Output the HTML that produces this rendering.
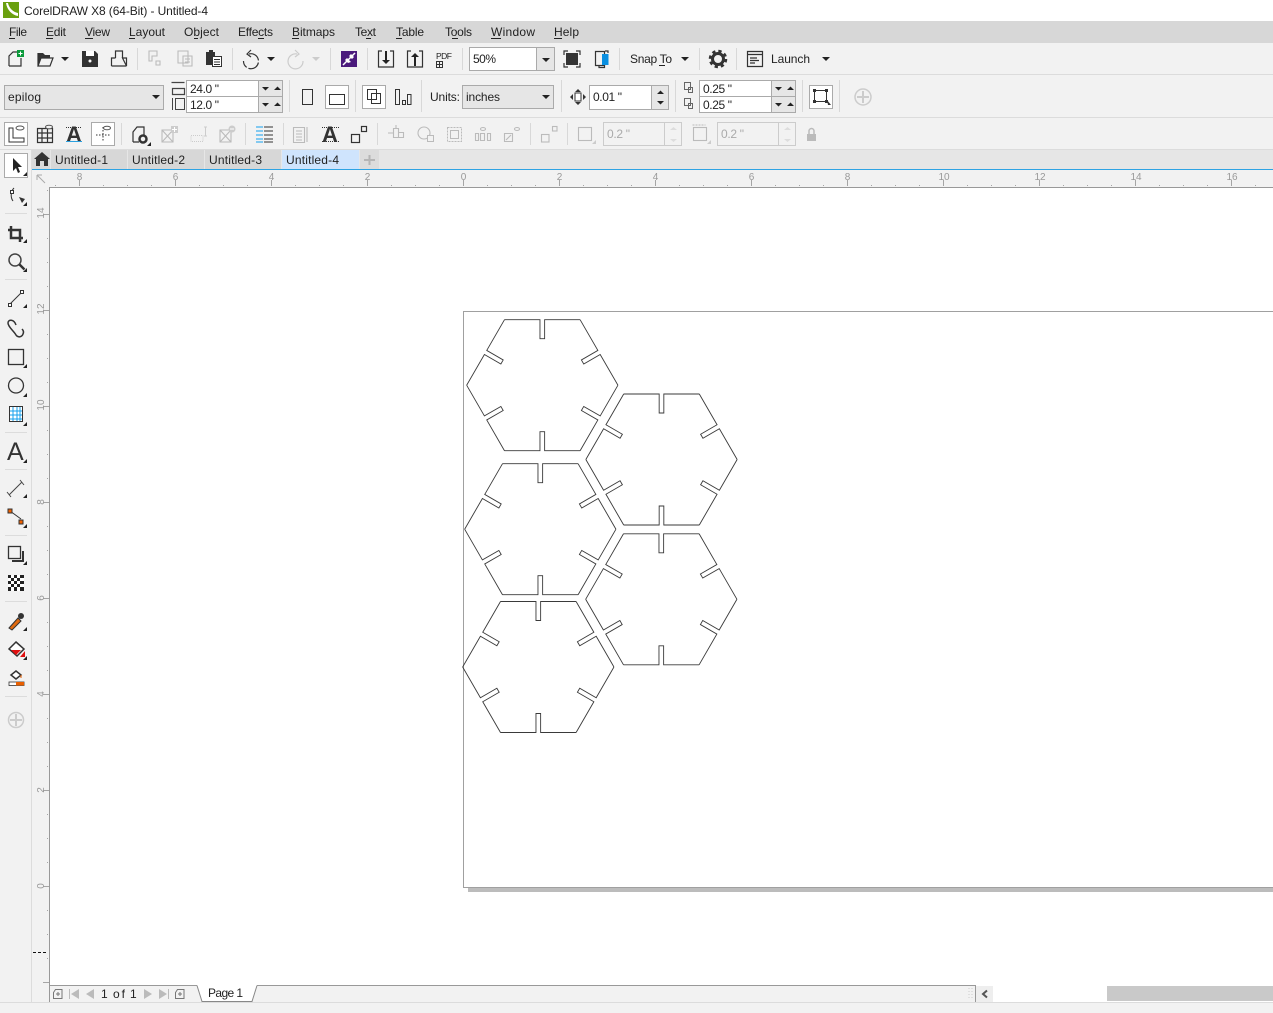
<!DOCTYPE html>
<html><head><meta charset="utf-8"><title>CorelDRAW X8</title>
<style>
html,body{margin:0;padding:0;background:#fff;overflow:hidden}
svg{display:block}
text{font-family:"Liberation Sans",sans-serif;font-size:12px;fill:#222}
.g{fill:#aaa}
.r{font-size:10px;fill:#999}
.s{fill:none;stroke:#333;stroke-width:1.2}
.d{fill:none;stroke:#bbb;stroke-width:1.1}
.k{fill:#333}
.dk{fill:#bbb}
.u{stroke:#222;stroke-width:1}
</style></head><body>
<svg xmlns="http://www.w3.org/2000/svg" width="1273" height="1013" viewBox="0 0 1273 1013">
<defs>
<path id="e" d="M-37.85-65.5H-2.33V-46.5H2.33V-65.5H37.85"/>
<g id="hex" fill="none" stroke="#3a3a3a" stroke-width=".9">
<use href="#e"/><use href="#e" transform="rotate(60)"/><use href="#e" transform="rotate(120)"/><use href="#e" transform="rotate(180)"/><use href="#e" transform="rotate(240)"/><use href="#e" transform="rotate(300)"/>
</g>
</defs>
<rect width="1273" height="1013" fill="#fff"/>
<!-- title -->
<rect x="3" y="2" width="16" height="16" fill="#6aa00f"/>
<path d="M6 3C7 10 12 15 18 16L18 13C13 12 9 8 8 3Z" fill="#fff"/>
<text x="24" y="15" textLength="184">CorelDRAW X8 (64-Bit) - Untitled-4</text>
<!-- menu -->
<rect y="21" width="1273" height="22" fill="#d7d7d7"/>
<text x="9" y="36" textLength="18">File</text><path class="u" d="M9 38.5h6"/>
<text x="46" y="36" textLength="20">Edit</text><path class="u" d="M46 38.5h7"/>
<text x="85" y="36" textLength="25">View</text><path class="u" d="M85 38.5h8"/>
<text x="129" y="36" textLength="36">Layout</text><path class="u" d="M129 38.5h6"/>
<text x="184" y="36" textLength="35">Object</text><path class="u" d="M194 38.5h4"/>
<text x="238" y="36" textLength="35">Effects</text><path class="u" d="M258 38.5h6"/>
<text x="292" y="36" textLength="43">Bitmaps</text><path class="u" d="M292 38.5h7"/>
<text x="355" y="36" textLength="21">Text</text><path class="u" d="M366 38.5h5"/>
<text x="396" y="36" textLength="28">Table</text><path class="u" d="M396 38.5h6"/>
<text x="445" y="36" textLength="27">Tools</text><path class="u" d="M452 38.5h6"/>
<text x="491" y="36" textLength="44">Window</text><path class="u" d="M491 38.5h10"/>
<text x="554" y="36" textLength="25">Help</text><path class="u" d="M554 38.5h8"/>
<!-- bars bg -->
<rect y="43" width="1273" height="107" fill="#f2f2f2"/>
<path d="M0 74.5H1273M0 117.5H1273M0 149.5H1273" stroke="#dcdcdc"/>
<rect x="0" y="150" width="32" height="863" fill="#f2f2f2"/>
<!-- row separators -->
<path d="M137.5 48v22M232.5 48v22M330.5 48v22M367.5 48v22M462.5 48v22M619.5 48v22M699.5 48v22M736.5 48v22M289.5 80v32M355.5 80v32M421.5 80v32M561.5 80v32M675.5 80v32M802.5 80v32M839.5 80v32M121.5 123v22M245.5 123v22M283.5 123v22M377.5 123v22M530.5 123v22M567.5 123v22" stroke="#d8d8d8"/>
<!-- row1 icons -->
<path class="s" d="M9 66V56L13 52H17M9 66H21V58"/>
<rect x="17" y="50" width="7" height="7" fill="#0a9a3a"/><path d="M20.500 51.500v4M18.500 53.500h4" stroke="#fff"/>
<path d="M38 53H43L45 55H50V58H41L38 66Z" fill="#333"/><path class="s" d="M38 66V53M38 66H50L53 58H41L38 66Z"/><path d="M61 57h8l-4 4z" fill="#222"/>
<path class="k" d="M82 51H95L98 54V67H82Z"/><rect x="86" y="51" width="8" height="5" fill="#fff"/><circle cx="90" cy="61" r="1.500" fill="#fff"/>
<path class="s" d="M115.500 58V51H122.500V58M111.500 66V58H115.500M122.500 58H126.500V66Z M111.500 66H126.500"/>
<path class="d" d="M149 51h8v5h-5v5h-3zM156 61h4v4h-4z"/>
<path class="d" d="M178 51h10v12h-10zM183 56h9v10h-9zM185 59h5M185 62h5"/>
<path class="k" d="M206 52h9v13h-9z"/><rect x="209" y="50" width="4" height="3" fill="#333"/><rect x="212.500" y="56.500" width="9" height="10" fill="#fff" stroke="#333"/><path d="M214 59.500h6M214 62h6M214 64.500h6" stroke="#333"/>
<path d="M249 54A7.500 7.500 0 1 1 243.500 61" fill="none" stroke="#333" stroke-width="1.200" stroke-dasharray="13 2"/><path d="M251 50l-4 4 4 3" fill="none" stroke="#333" stroke-width="1.200"/><path d="M267 57h8l-4 4z" fill="#222"/>
<path d="M297 54A7.500 7.500 0 1 0 303 61" fill="none" stroke="#ccc" stroke-width="1.200"/><path d="M295 50l4 4-4 3" fill="none" stroke="#ccc" stroke-width="1.200"/><path d="M312 57h8l-4 4z" fill="#ccc"/>
<rect x="341" y="51" width="16" height="16" fill="#4b1a7c"/><path d="M355 53L343 65" stroke="#fff" stroke-width="1.500"/><path d="M347 58l4 4-3 1-3-3zM351 54l3 3-2 2-3-3z" fill="#fff"/>
<path class="s" d="M382 51h-3.500v16h15v-16H390"/><path d="M386 51v10" stroke="#222" stroke-width="2"/><path d="M382 60h8l-4 4z" fill="#222"/>
<path class="s" d="M411 51h-3.500v16h15v-16H419"/><path d="M415 56v10" stroke="#222" stroke-width="2"/><path d="M411 57h8l-4-4z" fill="#222"/>
<text x="436" y="59" style="font-size:8.500px" textLength="16">PDF</text><path d="M436.500 61.500h6v6h-6zM439.500 61v6M436.500 64.500h6" fill="none" stroke="#333"/>
<rect x="469.500" y="47.500" width="85" height="23" fill="#fff" stroke="#aaa"/><rect x="537" y="48" width="17" height="22" fill="#e6e6e6"/><path d="M536.500 48v22" stroke="#aaa"/><path d="M542 58h8l-4 4z" fill="#222"/>
<text x="473" y="63" textLength="23">50%</text>
<path class="s" d="M564 55v-4h4M576 51h4v4M580 63v4h-4M568 67h-4v-4"/><rect x="566" y="53" width="12" height="12" fill="#333"/>
<path class="s" d="M595.500 51.500h9v14h-9z"/><rect x="602" y="54" width="6.500" height="11" fill="#0a8fe0"/><path class="s" d="M599 65.500v2h5.500v-2M605 51h3v2"/>
<text x="630" y="63" textLength="42">Snap To</text><path class="u" d="M659 65.500h6"/><path d="M681 57h8l-4 4z" fill="#222"/>
<circle cx="718" cy="59" r="5.500" fill="none" stroke="#333" stroke-width="3"/><circle cx="718" cy="59" r="8" fill="none" stroke="#333" stroke-width="2.500" stroke-dasharray="3.300 3"/>
<path class="s" d="M747.500 51.500h15v15h-15zM747.500 54.500h15M750 58h7M750 60.500h9M750 63h5"/>
<text x="771" y="63" textLength="39">Launch</text><path d="M822 57h8l-4 4z" fill="#222"/>
<!-- row2 -->
<rect x="4.500" y="85.500" width="159" height="24" fill="#e6e6e6" stroke="#aaa"/><text x="8" y="101" textLength="33">epilog</text><path d="M152 95h8l-4 4z" fill="#222"/>
<path class="s" d="M171.500 82.500h13M172.500 88.500h12v6h-12z" stroke-width="1" style="stroke:#444"/>
<path d="M172.500 98v12M175.500 98.500h9v11h-9z" fill="none" stroke="#444"/>
<rect x="186.500" y="80.500" width="96" height="32" fill="#fff" stroke="#aaa"/><rect x="259" y="81" width="23" height="31" fill="#e6e6e6"/><path d="M258.500 81v31M187 96.500h95" stroke="#aaa"/>
<text x="190" y="93" textLength="29">24.0 "</text><text x="190" y="109" textLength="29">12.0 "</text>
<path d="M262 87h7l-3.500 3.500zM262 103h7l-3.500 3.500zM274 90h7l-3.500-3.500zM274 106h7l-3.500-3.500z" fill="#222"/>
<rect x="302.500" y="89.500" width="10" height="15" fill="none" stroke="#333"/>
<rect x="325.500" y="85.500" width="23" height="23" fill="#fff" stroke="#aaa"/><rect x="329.500" y="94.500" width="15" height="10" fill="none" stroke="#333"/>
<rect x="362.500" y="85.500" width="23" height="23" fill="#fff" stroke="#aaa"/><path d="M367.500 89.500h9v10h-9zM371.500 93.500h9v10h-9z" fill="none" stroke="#333"/>
<path d="M395.500 89.500h4v15h-4zM402.500 100.500h3v4h-3zM407.500 94.500h3.500v10h-3.500z" fill="none" stroke="#333"/>
<text x="430" y="101" textLength="30">Units:</text>
<rect x="462.500" y="85.500" width="91" height="23" fill="#e6e6e6" stroke="#aaa"/><text x="466" y="101" textLength="34">inches</text><path d="M542 95h8l-4 4z" fill="#222"/>
<rect x="575" y="93" width="6" height="8" fill="#fff" stroke="#333"/><path d="M570 97l3-3v6zM586 97l-3-3v6zM578 89l-3 3h6zM578 105l-3-3h6z" fill="#333"/>
<rect x="589.500" y="85.500" width="79" height="24" fill="#fff" stroke="#aaa"/><rect x="652" y="86" width="16" height="23" fill="#e6e6e6"/><path d="M651.500 86v23" stroke="#aaa"/><text x="593" y="101" textLength="29">0.01 "</text><path d="M657 94h7l-3.500-3.500zM657 101h7l-3.500 3.500z" fill="#222"/>
<path d="M684.500 82.500h6v7h-6zM688.500 87.500h4v5h-4zM684.500 98.500h6v7h-6zM688.500 103.500h4v5h-4z" fill="none" stroke="#666"/>
<rect x="699.500" y="80.500" width="96" height="32" fill="#fff" stroke="#aaa"/><rect x="772" y="81" width="23" height="31" fill="#e6e6e6"/><path d="M771.500 81v31M700 96.500h95" stroke="#aaa"/>
<text x="703" y="93" textLength="29">0.25 "</text><text x="703" y="109" textLength="29">0.25 "</text>
<path d="M775 87h7l-3.500 3.500zM775 103h7l-3.500 3.500zM787 90h7l-3.500-3.500zM787 106h7l-3.500-3.500z" fill="#222"/>
<rect x="809.500" y="85.500" width="23" height="23" fill="#fff" stroke="#aaa"/><path d="M814.500 90.500h12v11h-12z" fill="none" stroke="#333"/><path d="M813 89h3v3h-3zM825 89h3v3h-3zM813 100h3v3h-3zM825 100h3v3h-3z" fill="#333"/><path d="M827 100l4 5-3 0z" fill="#333"/>
<circle cx="863" cy="97" r="8" fill="none" stroke="#ccc" stroke-width="1.500"/><path d="M863 91v12M857 97h12" stroke="#ccc" stroke-width="2"/>
<!-- row3 -->
<rect x="4.500" y="122.500" width="23" height="23" fill="#fff" stroke="#aaa"/><path d="M9 128v14h15v-4H13v-10z" fill="none" stroke="#333"/><ellipse cx="20" cy="128" rx="4" ry="2" fill="none" stroke="#555"/>
<path d="M37.500 128.500h15v14h-15zM37.500 133h15M37.500 138h15M42 128.500v14M47.500 128.500v14" fill="none" stroke="#333" stroke-width="1.200"/><ellipse cx="49" cy="127" rx="3.500" ry="1.800" fill="#f2f2f2" stroke="#555"/>
<text x="66" y="142" style="font-size:22px;font-weight:700;fill:#333" textLength="16">A</text><path d="M66 141.500h16" stroke="#2aa0e0"/><path d="M66 127.500h16" stroke="#333" stroke-dasharray="1 1"/>
<rect x="91.500" y="122.500" width="23" height="23" fill="#fff" stroke="#aaa"/><path d="M103 127v15M96 135h15" stroke="#333" stroke-dasharray="1.500 1.500"/><ellipse cx="107" cy="128" rx="3.500" ry="1.800" fill="#fff" stroke="#555"/>
<path class="s" d="M133 142v-10l4-5h7v8M133 142h6"/><circle cx="143" cy="139" r="3.500" fill="none" stroke="#333" stroke-width="2.500"/><path d="M147 146h4v-4z" fill="#222"/>
<path class="d" d="M162 130h11v12h-11zM162 130l11 12M173 130l-11 12"/><rect x="171" y="126" width="7" height="7" fill="#ccc"/><path d="M174.500 127v5M172 129.500h5" stroke="#fff"/>
<path d="M191 135.500h12v6h-12z" fill="none" stroke="#ccc" stroke-dasharray="1 1"/><path d="M204 127h3M205.500 127v9M204 136h3" stroke="#ccc"/>
<path class="d" d="M220 130h11v12h-11zM220 130l11 12M231 130l-11 12"/><circle cx="232" cy="129" r="3.500" fill="#ccc"/><path d="M230 129h4" stroke="#fff"/>
<path d="M264 127h9M264 131h9M264 135h9M264 139h9M264 142h9" stroke="#333"/><path d="M256 127h7M256 131h7M256 135h7M256 139h7M256 142h7" stroke="#14a0ee"/>
<path class="d" d="M293.500 127.500h11v15h-11zM296 131h6M296 134h6M296 137h6M296 140h6M307 127v15"/>
<text x="322" y="142" style="font-size:22px;font-weight:700;fill:#333" textLength="16">A</text><path d="M322 127.500h17M322 141.500h17" stroke="#333" stroke-dasharray="1 1"/>
<rect x="351.500" y="134.500" width="8" height="8" fill="none" stroke="#333" stroke-width="1.200"/><rect x="361.500" y="126.500" width="5" height="5" fill="none" stroke="#333" stroke-width="1.200"/>
<path class="d" d="M393.500 128.500h5v9h-5zM398.500 132.500h5v5h-5zM388 133h5M396 125v3"/>
<circle cx="424" cy="133" r="6" class="d"/><rect x="427.500" y="135.500" width="6" height="6" fill="#f2f2f2" stroke="#bbb"/>
<path d="M447.500 127.500h14v14h-14z" fill="none" stroke="#bbb" stroke-dasharray="2 1"/><rect x="450.500" y="130.500" width="8" height="8" fill="none" stroke="#bbb"/>
<path class="d" d="M475.500 133.500h3v7h-3zM480.500 133.500h4v7h-4zM487.500 133.500h3v7h-3z"/><ellipse cx="483" cy="129" rx="2.500" ry="1.500" class="d"/>
<path class="d" d="M504.500 133.500h8v8h-8zM506 140l5-5"/><ellipse cx="517" cy="129" rx="2.500" ry="1.500" class="d"/>
<rect x="541.500" y="134.500" width="7.500" height="7.500" class="d"/><rect x="552.500" y="126.500" width="4.500" height="4.500" class="d"/>
<rect x="578.500" y="127.500" width="13" height="13" class="d"/><path d="M592 144h4v-4z" fill="#ccc"/>
<rect x="603.500" y="122.500" width="78" height="23" fill="#f2f2f2" stroke="#ccc"/><path d="M664.500 123v22" stroke="#ccc"/><text class="g" x="607" y="138" textLength="23">0.2 "</text><path d="M670 130h7l-3.500-3zM670 139h7l-3.500 3z" fill="#ddd"/>
<rect x="693.500" y="127.500" width="13" height="13" class="d"/><path d="M692.500 125h13" stroke="#bbb" stroke-dasharray="2 1"/><path d="M707 144h4v-4z" fill="#ccc"/>
<rect x="717.500" y="122.500" width="78" height="23" fill="#f2f2f2" stroke="#ccc"/><path d="M778.500 123v22" stroke="#ccc"/><text class="g" x="721" y="138" textLength="23">0.2 "</text><path d="M784 130h7l-3.500-3zM784 139h7l-3.500 3z" fill="#ddd"/>
<rect x="807" y="134" width="9" height="7" fill="#bbb"/><path d="M809 134v-3a2.500 2.500 0 0 1 5 0v3" fill="none" stroke="#bbb" stroke-width="1.500"/>
<!-- tabs -->
<rect x="32" y="150" width="1241" height="19" fill="#e6e6e6"/>
<rect x="32" y="150" width="18" height="19" fill="#dadada"/>
<path d="M34 159l8-7 8 7h-2v7h-4v-5h-4v5h-4v-7z" fill="#333"/>
<rect x="51" y="150" width="76" height="19" fill="#d7d7d7"/><rect x="128" y="150" width="76" height="19" fill="#d7d7d7"/><rect x="205" y="150" width="76" height="19" fill="#d7d7d7"/><rect x="282" y="150" width="77" height="19" fill="#cfe4fd"/><rect x="360" y="150" width="19" height="19" fill="#dcdcdc"/>
<text x="55" y="164" textLength="53">Untitled-1</text><text x="132" y="164" textLength="53">Untitled-2</text><text x="209" y="164" textLength="53">Untitled-3</text><text x="286" y="164" textLength="53">Untitled-4</text>
<path d="M369.500 155v10M364 160h11" stroke="#b5b5b5" stroke-width="2"/>
<rect x="32" y="169" width="1241" height="1" fill="#2ea3e3"/>
<!-- rulers -->
<rect x="32" y="170" width="1241" height="17" fill="#f2f2f2"/>
<rect x="32" y="170" width="17" height="832" fill="#f2f2f2"/>
<path d="M31.500 150V1002" stroke="#dcdcdc"/>
<path d="M79 183H1273" stroke="#a5a5a5" stroke-width="6" stroke-dasharray="1 95" fill="none"/>
<path d="M55 185.500H1273" stroke="#a5a5a5" stroke-dasharray="1 23" fill="none"/>
<path d="M49 187.500H1273M49.500 187V1002" stroke="#999" fill="none"/>
<path d="M46 214V984" stroke="#a5a5a5" stroke-width="6" stroke-dasharray="1 95" fill="none"/>
<path d="M47.500 190V984" stroke="#a5a5a5" stroke-dasharray="1 23" fill="none"/>
<path d="M33 952.500H48" stroke="#111" stroke-dasharray="3 2"/>
<path d="M37 175h5M37 175v5M37 175l8 8" stroke="#aaa" fill="none"/>
<g class="r" text-anchor="middle">
<text class="r" x="79.500" y="180">8</text><text class="r" x="175.500" y="180">6</text><text class="r" x="271.500" y="180">4</text><text class="r" x="367.500" y="180">2</text><text class="r" x="463.500" y="180">0</text><text class="r" x="559.500" y="180">2</text><text class="r" x="655.500" y="180">4</text><text class="r" x="751.500" y="180">6</text><text class="r" x="847.500" y="180">8</text><text class="r" x="944" y="180">10</text><text class="r" x="1040" y="180">12</text><text class="r" x="1136" y="180">14</text><text class="r" x="1232" y="180">16</text>
<text class="r" transform="translate(44,213) rotate(-90)">14</text><text class="r" transform="translate(44,309) rotate(-90)">12</text><text class="r" transform="translate(44,405) rotate(-90)">10</text><text class="r" transform="translate(44,502) rotate(-90)">8</text><text class="r" transform="translate(44,598) rotate(-90)">6</text><text class="r" transform="translate(44,694) rotate(-90)">4</text><text class="r" transform="translate(44,790) rotate(-90)">2</text><text class="r" transform="translate(44,886) rotate(-90)">0</text>
</g>
<!-- page -->
<path d="M1273 311.500H463.500V887.500H1273" fill="none" stroke="#a0a0a0"/>
<rect x="468" y="888" width="805" height="4" fill="#bcbcbc"/>
<use href="#hex" transform="translate(542.300 385.200)"/>
<use href="#hex" transform="translate(661.500 459.500)"/>
<use href="#hex" transform="translate(540.300 529.200)"/>
<use href="#hex" transform="translate(661.300 599.300)"/>
<use href="#hex" transform="translate(538.300 667)"/>
<!-- toolbox -->
<rect x="4.500" y="153.500" width="23" height="24" fill="#fff" stroke="#aaa"/><path d="M13 158v13l3-3 2 5 2-1-2-5h4z" fill="#222"/><path d="M23 176h4v-4z" fill="#222"/>
<path d="M14 188c-3 3-4 9-1 13" fill="none" stroke="#333"/><rect x="10.500" y="190.500" width="3" height="3" fill="#fff" stroke="#333"/><path d="M19 197l6 2-3 4z" fill="#333"/><path d="M23 206h4v-4z" fill="#222"/>
<path d="M5 213.500H27M5 279.500H27M5 432.500H27M5 469.500H27M5 535.500H27M5 601.500H27M5 696.500H27" stroke="#dcdcdc"/>
<path d="M11 226v12h12M8 230h12v12" fill="none" stroke="#333" stroke-width="2.500"/><path d="M23 243h4v-4z" fill="#222"/>
<circle cx="15" cy="260" r="6" fill="none" stroke="#444" stroke-width="1.500"/><path d="M19.500 264.500l5 5" stroke="#333" stroke-width="2.500"/><path d="M23 272h4v-4z" fill="#222"/>
<path d="M10 304L21 293" stroke="#333"/><rect x="8.500" y="303.500" width="3" height="3" fill="#fff" stroke="#333"/><rect x="20.500" y="290.500" width="3" height="3" fill="#fff" stroke="#333"/><path d="M23 308h4v-4z" fill="#222"/>
<path d="M16 325c-2-6-8-6-8-2 0 4 6 8 8 12 2 3 6 2 7-1 1-2 0-4-1-5" fill="none" stroke="#333" stroke-width="1.500"/>
<rect x="8.500" y="349.500" width="15" height="15" fill="none" stroke="#333" stroke-width="1.300"/><path d="M23 368h4v-4z" fill="#222"/>
<circle cx="16" cy="385.500" r="7.500" fill="none" stroke="#333" stroke-width="1.300"/><path d="M23 397h4v-4z" fill="#222"/>
<rect x="9.500" y="406.500" width="13" height="15" fill="#fff" stroke="#333"/><path d="M10 411h12M10 415h12M10 419h12M13 407v14M17 407v14M20 407v14" stroke="#14a0ee"/><path d="M23 426h4v-4z" fill="#222"/>
<text x="7" y="460" style="font-size:25px;fill:#333" textLength="18">A</text><path d="M23 463h4v-4z" fill="#222"/>
<path d="M9 495L22 482M7 492l4 5M20 480l4 5" stroke="#444" fill="none"/><path d="M23 498h4v-4z" fill="#222"/>
<path d="M10 511L21 519" stroke="#333"/><rect x="8" y="509" width="4" height="4" fill="#f06000" stroke="#333"/><rect x="19" y="520" width="4" height="4" fill="#f06000" stroke="#333"/><path d="M23 528h4v-4z" fill="#222"/>
<rect x="8.500" y="546.500" width="12" height="12" fill="none" stroke="#333" stroke-width="1.300"/><path d="M12 561h11v-10" fill="none" stroke="#333" stroke-width="2"/><path d="M23 565h4v-4z" fill="#222"/>
<rect x="8" y="575" width="16" height="16" fill="#222"/><path d="M11 575h3v3h-3zM17 575h3v3h-3zM8 578h3v3h-3zM14 578h3v3h-3zM20 578h4v3h-4zM11 581h3v3h-3zM17 581h3v3h-3zM8 584h3v3h-3zM14 584h3v3h-3zM20 584h4v3h-4zM11 587h3v4h-3zM17 587h3v4h-3z" fill="#fff"/>
<path d="M9 628L18 618l3 3-9 9z" fill="#e06a10" stroke="#333"/><circle cx="21" cy="616" r="3" fill="#333"/><path d="M23 631h4v-4z" fill="#222"/>
<path d="M16 642l8 7-7 7-8-7z" fill="#fff" stroke="#333" stroke-width="1.500"/><path d="M11 650h10l-5 5z" fill="#e01010"/><path d="M20 657h5v-6z" fill="#e01010"/><path d="M23 660h4v-4z" fill="#222"/>
<path d="M16 671l5 4-5 4-5-4z" fill="#fff" stroke="#333" stroke-width="1.500"/><rect x="9" y="682" width="15" height="3.500" fill="#fff" stroke="#333" stroke-width=".8"/><rect x="16" y="682" width="8" height="3.500" fill="#e85f00"/><path d="M21 675v3" stroke="#e85f00"/>
<circle cx="16" cy="720" r="7.500" fill="none" stroke="#ccc" stroke-width="1.500"/><path d="M16 714v12M10 720h12" stroke="#ccc" stroke-width="2"/>
<!-- bottom nav -->
<rect x="50" y="986" width="925" height="16" fill="#f2f2f2"/>
<path d="M50 985.500H197M257 985.500H975.500V1002" stroke="#999" fill="none"/>
<path d="M197 985.500L202 1001.500H252L257 985.500" fill="#fff" stroke="#888"/>
<text x="208" y="997" textLength="35">Page 1</text>
<path d="M53.500 992.500l2-3h6.500v9h-8.500zM58 992v4M56 994h4" fill="none" stroke="#777"/>
<path d="M69.500 989v10" stroke="#bbb"/><path d="M79 989v10l-8-5zM94 989v10l-8-5z" fill="#bbb"/>
<text x="101" y="998" textLength="6">1</text><text x="113" y="998" textLength="12">of</text><text x="130" y="998" textLength="6">1</text>
<path d="M144 989v10l8-5zM159 989v10l8-5z" fill="#bbb"/><path d="M168.500 989v10" stroke="#bbb"/>
<path d="M175.500 992.500l2-3h6.500v9h-8.500zM180 992v4M178 994h4" fill="none" stroke="#777"/>
<path d="M969 988v12M972 988v12" stroke="#ccc" stroke-dasharray="1 2"/>
<rect x="976" y="986" width="17" height="16" fill="#eeeeee"/><path d="M987 990.500l-4 3.500 4 3.500" fill="none" stroke="#555" stroke-width="2"/>
<rect x="1107" y="986" width="166" height="15" fill="#c9c9c9"/>
<rect y="1003" width="1273" height="10" fill="#f2f2f2"/>
<path d="M0 1002.500H1273" stroke="#dcdcdc"/>
</svg>
</body></html>
